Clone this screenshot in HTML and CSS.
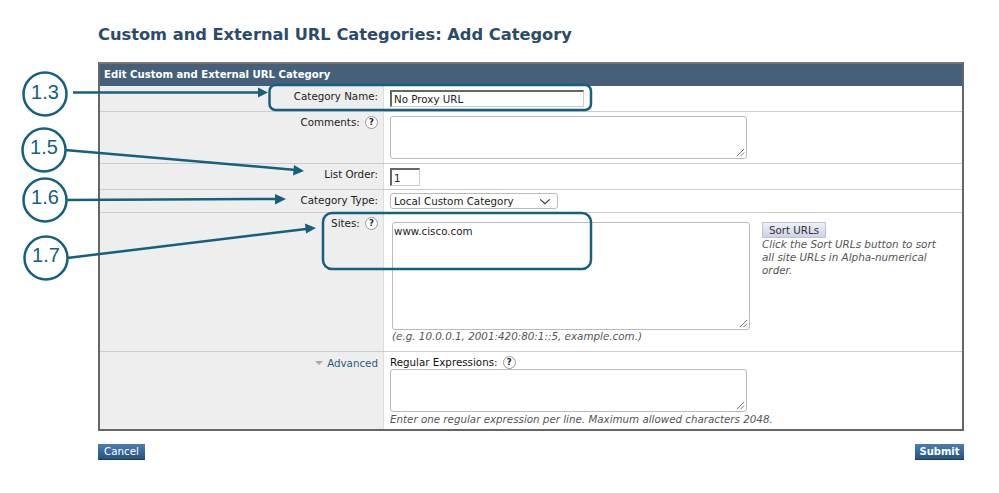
FILE: index.html
```html
<!DOCTYPE html>
<html lang="en">
<head>
<meta charset="utf-8">
<title>Add Category</title>
<link rel="stylesheet" href="styles.css">
</head>
<body>
<main class="page">
  <h1 class="title">Custom and External URL Categories: Add Category</h1>
  <section class="panel">
    <h2 class="panel-head">Edit Custom and External URL Category</h2>
    <div class="row row-name">
      <div class="label">Category Name:</div>
      <div class="field"><div class="text-input name-input">No Proxy URL</div></div>
    </div>
    <div class="row row-comments">
      <div class="label">Comments: <span class="help">?</span></div>
      <div class="field"><div class="area comments-area"><svg class="grip" viewBox="0 0 10 10"><path d="M1 9 9 1M5 9 9 5"/></svg></div></div>
    </div>
    <div class="row row-order">
      <div class="label">List Order:</div>
      <div class="field"><div class="text-input order-input">1</div></div>
    </div>
    <div class="row row-type">
      <div class="label">Category Type:</div>
      <div class="field"><div class="select">Local Custom Category<svg class="chev" viewBox="0 0 14 8"><path d="M1.5 1.5 7 6.5l5.5-5"/></svg></div></div>
    </div>
    <div class="row row-sites">
      <div class="label">Sites: <span class="help">?</span></div>
      <div class="field sites-field">
        <div class="sites-main">
          <div class="area sites-area">www.cisco.com<svg class="grip" viewBox="0 0 10 10"><path d="M1 9 9 1M5 9 9 5"/></svg></div>
          <div class="hint sites-hint">(e.g. 10.0.0.1, 2001:420:80:1::5, example.com.)</div>
        </div>
        <div class="sort">
          <div class="sort-btn">Sort URLs</div>
          <div class="hint sort-hint">Click the Sort URLs button to sort all site URLs in Alpha-numerical order.</div>
        </div>
      </div>
    </div>
    <div class="row row-adv">
      <div class="label"><span class="tri"></span><span class="adv-link">Advanced</span></div>
      <div class="field">
        <div class="regex-label">Regular Expressions: <span class="help">?</span></div>
        <div class="area regex-area"><svg class="grip" viewBox="0 0 10 10"><path d="M1 9 9 1M5 9 9 5"/></svg></div>
        <div class="hint regex-hint">Enter one regular expression per line. Maximum allowed characters 2048.</div>
      </div>
    </div>
  </section>
  <div class="actions">
    <div class="btn">Cancel</div>
    <div class="btn btn-bold">Submit</div>
  </div>
</main>
<svg class="notes" viewBox="0 0 999 493" width="999" height="493">
  <g class="note-line">
    <rect x="269.500" y="85" width="321.500" height="25" rx="6"/>
    <rect x="323" y="213" width="268" height="56" rx="9"/>
    <circle cx="45" cy="94" r="21.500"/>
    <circle cx="44" cy="150" r="21.500"/>
    <circle cx="45" cy="200" r="21.500"/>
    <circle cx="46" cy="258" r="21.500"/>
    <path d="M73 92.500H260"/>
    <path d="M65 150 296 170"/>
    <path d="M66 200 278 199"/>
    <path d="M67 258 306 229"/>
  </g>
  <g class="note-head">
    <path d="M268 92.500 258 87.500V97.500Z"/>
    <path d="M304 171 293 175.500 294 165Z"/>
    <path d="M286 199 275 194V204.500Z"/>
    <path d="M316 228 305 223.500 306 233.500Z"/>
  </g>
  <g class="note-text">
    <text x="45" y="98.500">1.3</text>
    <text x="44" y="154">1.5</text>
    <text x="45" y="204">1.6</text>
    <text x="46" y="262">1.7</text>
  </g>
</svg>
</body>
</html>
```
FILE: styles.css
```css
* { box-sizing: border-box; }
html, body { margin: 0; background: #fff; }
body {
  width: 999px;
  height: 493px;
  overflow: hidden;
  position: relative;
  font-family: "DejaVu Sans", Verdana, sans-serif;
  font-size: 10.300px;
  color: #222;
}
.page { padding: 24px 35px 0 98px; }
.title {
  margin: 0 0 17px;
  height: 21px;
  font-size: 16.260px;
  line-height: 21px;
  font-weight: 700;
  color: #2b4b6b;
  white-space: nowrap;
}
.panel {
  border: 2px solid #666;
  border-top-color: #777;
  background: #fff;
}
.panel-head {
  margin: 0;
  height: 22px;
  padding: 4px 4px 0;
  background: #46607a;
  color: #fff;
  font-size: 10.150px;
  line-height: 14px;
  font-weight: 700;
}
.row {
  display: grid;
  grid-template-columns: 284px 1fr;
  border-bottom: 1px solid #ccc;
}
.row-name { height: 26px; }
.row-comments { height: 52px; }
.row-order { height: 26px; }
.row-type { height: 23px; }
.row-sites { height: 139px; }
.row-adv { height: 77px; border-bottom: 0; }
.label {
  background: #eee;
  border-right: 1px solid #ddd;
  text-align: right;
  padding: 3px 5px 0 0;
  line-height: 14px;
  white-space: nowrap;
}
.row-adv .label { padding-top: 4px; }
.help {
  display: inline-block;
  width: 13px;
  height: 13px;
  margin-left: 2px;
  border: 1px solid #999;
  border-radius: 50%;
  background: #fff;
  color: #222;
  font-size: 8.500px;
  font-weight: 700;
  line-height: 11px;
  text-align: center;
  vertical-align: 1px;
}
.field { padding-left: 6px; }
.text-input {
  background: #fff;
  border: 1px solid #ccc;
  border-top: 2px solid #666;
  border-left: 2px solid #666;
  padding-left: 2px;
  line-height: 14px;
}
.name-input { width: 194px; height: 17px; margin-top: 4px; }
.order-input { width: 30px; height: 18px; margin-top: 4px; padding-top: 1px; }
.area {
  position: relative;
  background: #fff;
  border: 1px solid #bbb;
  border-radius: 3px;
}
.grip {
  position: absolute;
  right: 1px;
  bottom: 1px;
  width: 9px;
  height: 9px;
  fill: none;
  stroke: #666;
  stroke-width: 1;
}
.comments-area { width: 357px; height: 43px; margin-top: 4px; }
.select {
  display: flex;
  align-items: center;
  justify-content: space-between;
  width: 168px;
  height: 16px;
  margin-top: 3px;
  padding: 0 6px 0 3px;
  background: #fff;
  border: 1px solid #bbb;
  border-radius: 3px;
}
.chev {
  width: 12px;
  height: 7px;
  fill: none;
  stroke: #333;
  stroke-width: 1.400;
}
.sites-field { display: flex; padding-left: 8px; }
.sites-main { width: 370px; }
.sites-area {
  width: 358px;
  height: 108px;
  margin-top: 9px;
  padding: 1px;
  line-height: 14px;
}
.hint {
  font-style: italic;
  color: #555;
  line-height: 13px;
}
.sites-hint { font-size: 10.350px; }
.sort { width: 178px; padding-top: 9px; }
.sort-hint { font-size: 10.400px; }
.sort-btn {
  width: 64px;
  height: 16px;
  background: linear-gradient(#eef0f8, #ccd3e6);
  border: 1px solid #bcc4d8;
  text-align: center;
  line-height: 14px;
  color: #333;
}
.tri {
  display: inline-block;
  width: 0;
  height: 0;
  margin-right: 4px;
  border-left: 4px solid transparent;
  border-right: 4px solid transparent;
  border-top: 4px solid #aaa;
  vertical-align: 2px;
}
.adv-link { color: #1f5c7c; }
.regex-label { height: 17px; padding-top: 3px; line-height: 14px; color: #111; }
.regex-area { width: 357px; height: 43px; }
.regex-hint { padding-top: 1px; }
.actions {
  display: flex;
  justify-content: space-between;
  margin-top: 13px;
}
.btn {
  width: 47px;
  height: 16px;
  background: linear-gradient(#4b7db5, #27547f);
  color: #fff;
  border-bottom: 1px solid #1d3e5e;
  line-height: 15px;
  text-align: center;
}
.btn-bold { width: 49px; font-weight: 700; font-size: 10px; }
.notes { position: absolute; left: 0; top: 0; pointer-events: none; }
.note-line { fill: none; stroke: #15607f; stroke-width: 2.500; }
.note-head { fill: #15607f; }
.note-text {
  fill: #15607f;
  font-family: "Liberation Sans", Arial, sans-serif;
  font-size: 20px;
  text-anchor: middle;
}
```
